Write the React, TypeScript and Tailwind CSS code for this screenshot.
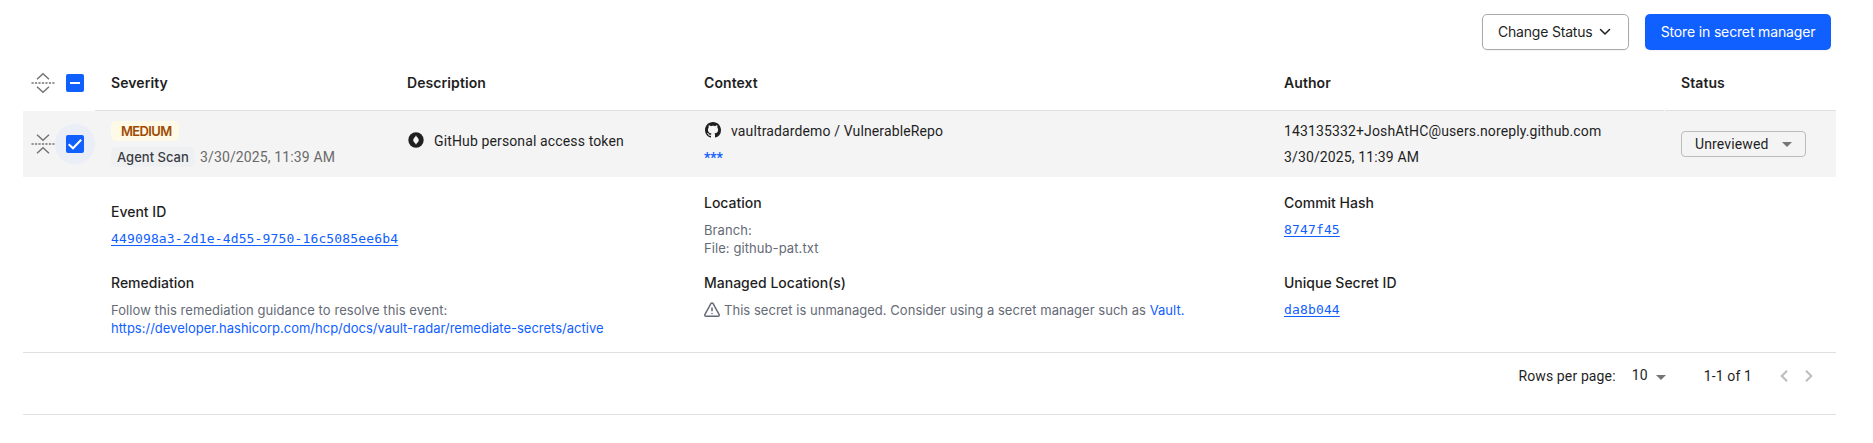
import type { ReactNode } from 'react';

const rb = "font-['Roboto',sans-serif] text-sm tracking-[0.13px] text-[#1f1f1f]";

function Fold({ open }: { open: boolean }) {
  return (
    <svg width="24" height="24" viewBox="0 0 24 24" fill="none" stroke="#757575" strokeWidth="1.5">
      {open ? <path d="M6 8.200 12 2.700 18 8.200M6 15.800 12 21.300 18 15.800" /> : <path d="M6 2.700 12 8.200 18 2.700M6 21.300 12 15.800 18 21.300" />}
      <path d="M.5 12H23.500" strokeDasharray="2.200 1.270" />
    </svg>
  );
}

function Check({ partial }: { partial?: boolean }) {
  return (
    <svg width="18" height="18" viewBox="0 0 18 18" fill="none">
      <rect width="18" height="18" rx="2" fill="#1060ff" />
      {partial ? <path d="M4 9h10" stroke="#fff" strokeWidth="2" /> : <path d="M2.7 9.2 7 13.3 15.2 4.8" stroke="#fff" strokeWidth="2" />}
    </svg>
  );
}

function Caret() {
  return (
    <svg width="10" height="5" viewBox="0 0 10 5" fill="#757575">
      <path d="M0 0h10L5 5z" />
    </svg>
  );
}

function Title({ children }: { children: ReactNode }) {
  return <div className="h-[27px] text-sm leading-[18px] font-medium text-[#1f1f1f]">{children}</div>;
}

function Mono({ children }: { children: ReactNode }) {
  return (
    <a className="block w-fit font-['DejaVu_Sans_Mono',monospace] text-[13px] leading-[18px] tracking-[0.15px] text-[#1060ff] underline underline-offset-2">
      {children}
    </a>
  );
}

const head = 'border-b border-[#e0e0e0] pl-4 flex items-center text-sm font-semibold tracking-[0.08px] text-[#1f1f1f]';
const cols = 'grid grid-cols-[72px_296px_297px_580px_397px_171px]';

export default function App() {
  return (
    <div className="h-[443px] w-[1873px] overflow-hidden bg-white pr-[37px] pl-[23px] font-['Inter',sans-serif]">
      <div className="flex h-14 items-start justify-end gap-4 pt-3.5 pr-[5px]">
        <button className="flex h-9 w-[147px] items-center rounded-[5px] border border-[#a9a9a9] pl-[15px] text-sm tracking-[-0.2px] text-[#1f1f1f] shadow-xs">
          Change Status
          <svg className="ml-[7px]" width="12" height="8" viewBox="0 0 12 8" fill="none" stroke="#1f1f1f" strokeWidth="1.5" strokeLinecap="round" strokeLinejoin="round">
            <path d="M1.5 1.5 6 6l4.500-4.500" />
          </svg>
        </button>
        <button className="h-9 w-[186px] rounded-[5px] bg-[#1060ff] text-sm tracking-[-0.15px] text-white shadow-xs">Store in secret manager</button>
      </div>

      <div className={`${cols} h-[55px]`}>
        <div className="flex items-center gap-[11px] pb-px pl-2">
          <Fold open />
          <Check partial />
        </div>
        <div className={head}>Severity</div>
        <div className={head}>Description</div>
        <div className={head}>Context</div>
        <div className={`${head} mr-px`}>Author</div>
        <div className={head}>Status</div>
      </div>

      <div className={`${cols} h-[66px] bg-[#f4f4f4]`}>
        <div className="flex items-center pl-2">
          <Fold open={false} />
          <div className="grid size-10 shrink-0 place-items-center rounded-full bg-[#e9eef7]">
            <Check />
          </div>
        </div>
        <div className="pt-2.5 pl-4">
          <div className="h-5 w-[68px] rounded-[5px] bg-[#fff9e8] pl-2.5 text-[13px] leading-5 font-semibold tracking-[-0.65px] text-[#9e4b02]">MEDIUM</div>
          <div className="mt-1.5 flex h-5 items-center">
            <span className="h-5 w-[84px] rounded-[5px] bg-[#eff0f2] pl-1.5 text-[13px] leading-5 font-medium text-[#3b3d45]">Agent Scan</span>
            <span className="pl-[5px] font-['Roboto',sans-serif] text-sm leading-5 tracking-[0.13px] text-[#6a6a6a]">3/30/2025, 11:39 AM</span>
          </div>
        </div>
        <div className={`${rb} flex items-start pt-5 pl-[17px]`}>
          <svg className="mt-px" width="16" height="16" viewBox="0 0 16 16">
            <circle cx="8" cy="8" r="7.700" fill="#1f1f1f" />
            <path d="M8 3.200C8.300 5 10.800 6 10.800 8.200 10.800 10 8.500 11 8 12.800 7.500 11 5.200 10 5.200 8.200 5.200 6 7.700 5 8 3.200z" fill="#f4f4f4" />
          </svg>
          <span className="pl-[10px] leading-5">GitHub personal access token</span>
        </div>
        <div className={`${rb} pt-2.5 pl-4`}>
          <div className="flex h-5 items-center pl-px">
            <svg className="-mt-0.5" width="16" height="16" viewBox="0 0 16 16" fill="#1f1f1f">
              <path d="M8 0C3.580 0 0 3.580 0 8c0 3.540 2.290 6.530 5.470 7.590.4.070.55-.17.55-.38 0-.19-.01-.82-.01-1.490-2.010.37-2.530-.49-2.690-.94-.09-.23-.48-.94-.82-1.130-.28-.15-.68-.52-.01-.53.63-.01 1.080.58 1.230.82.72 1.210 1.870.87 2.330.66.070-.52.28-.87.51-1.070-1.780-.2-3.640-.89-3.640-3.950 0-.87.31-1.590.82-2.150-.08-.2-.36-1.020.08-2.120 0 0 .67-.21 2.200.82.64-.18 1.320-.27 2-.27s1.360.09 2 .27c1.530-1.040 2.200-.82 2.200-.82.44 1.100.16 1.920.08 2.120.51.56.82 1.270.82 2.150 0 3.070-1.870 3.750-3.650 3.950.29.25.54.73.54 1.480 0 1.070-.01 1.930-.01 2.200 0 .21.15.46.55.38A8.010 8.010 0 0 0 16 8c0-4.420-3.580-8-8-8z" />
            </svg>
            <span className="pl-[10px] leading-5">vaultradardemo / VulnerableRepo</span>
          </div>
          <div className="mt-[7px] text-sm leading-5 font-semibold tracking-[0px] text-[#1060ff]">***</div>
        </div>
        <div className={`${rb} pt-2.5 pl-4 leading-5`}>
          <div>143135332+JoshAtHC@users.noreply.github.com</div>
          <div className="mt-1.5">3/30/2025, 11:39 AM</div>
        </div>
        <div className="flex items-center pl-4">
          <div className={`${rb} flex h-[26px] w-[125px] items-center justify-between rounded border border-[#bcbcbc] pr-[13px] pl-[13px]`}>
            Unreviewed
            <Caret />
          </div>
        </div>
      </div>

      <div className="grid h-[176px] grid-cols-[593px_580px_1fr] border-b border-[#e0e0e0] pt-[17px] pl-[88px] text-[13px] leading-[18px] text-[#656a76]">
        <div className="pt-[9px]">
          <Title>Event ID</Title>
          <Mono>449098a3-2d1e-4d55-9750-16c5085ee6b4</Mono>
          <div className="h-[26px]" />
          <Title>Remediation</Title>
          <div className="tracking-[0.07px]">Follow this remediation guidance to resolve this event:</div>
          <a className="text-[#1060ff]">https://developer.hashicorp.com/hcp/docs/vault-radar/remediate-secrets/active</a>
        </div>
        <div>
          <Title>Location</Title>
          <div className="tracking-[0.08px]">Branch:</div>
          <div className="tracking-[0.08px]">File: github-pat.txt</div>
          <div className="h-[17px]" />
          <Title>Managed Location(s)</Title>
          <div className="flex items-center gap-1">
            <svg width="16" height="16" viewBox="0 0 16 16" fill="none" stroke="#656a76" strokeWidth="1.500" strokeLinecap="round" strokeLinejoin="round">
              <path d="M6.900 1.700.95 12.300a1.250 1.250 0 0 0 1.100 1.950h11.900a1.250 1.250 0 0 0 1.100-1.950L9.100 1.700a1.260 1.260 0 0 0-2.200 0zM8 6v2.800M8 11.500v.01" />
            </svg>
            <span className="tracking-[0.035px]">
              This secret is unmanaged. Consider using a secret manager such as <a className="text-[#1060ff]">Vault.</a>
            </span>
          </div>
        </div>
        <div>
          <Title>Commit Hash</Title>
          <Mono>8747f45</Mono>
          <div className="h-[35px]" />
          <Title>Unique Secret ID</Title>
          <Mono>da8b044</Mono>
        </div>
      </div>

      <div className={`${rb} flex h-[62px] items-start justify-end border-b border-[#e0e0e0] pt-[13px] pr-[23px] leading-5`}>
        <span>Rows per page:</span>
        <span className="ml-4 h-5 -translate-y-px">10</span>
        <span className="ml-2 flex h-5 items-center pt-0.5">
          <Caret />
        </span>
        <span className="ml-[38px] tracking-[0.13px]">1-1 of 1</span>
        <svg className="mt-1 ml-[28px]" width="33" height="12" viewBox="0 0 33 12" fill="none" stroke="#bdbdbd" strokeWidth="2">
          <path d="M7 .7 1.700 6 7 11.300M26 .7 31.300 6 26 11.300" />
        </svg>
      </div>
    </div>
  );
}
